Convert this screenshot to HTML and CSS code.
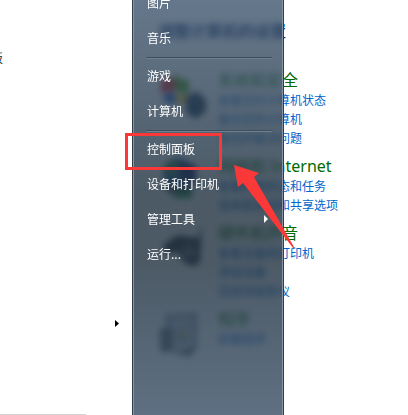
FILE: index.html
```
<!DOCTYPE html>
<html lang="zh-CN">
<head>
<meta charset="utf-8">
<title>控制面板</title>
<link rel="stylesheet" href="styles.css">
</head>
<body>
<div class="desktop">
  <aside class="programs">
    <a class="program" href="#">控制面板</a>
    <svg class="more" width="4" height="7" viewBox="0 0 4 7" aria-hidden="true"><path d="M0 0L4 3.5L0 7Z" fill="#000"/></svg>
    <hr class="search-edge">
  </aside>

  <main class="panel">
    <h1 class="panel-title">调整计算机的设置</h1>
    <section class="category">
      <svg class="icon" width="48" height="50" viewBox="0 0 48 50" aria-hidden="true">
        <path d="M3 10Q12 4 17 8V22Q10 18 3 23Z" fill="#e01010"/><path d="M17 2Q26 12 31 8V21Q24 24 17 18Z" fill="#409800"/><path d="M6 24Q12 20 17 23V34Q10 30 6 32Z" fill="#1050c0"/><path d="M18 22Q24 25 29 22V30Q23 34 18 32Z" fill="#e8b800"/><path d="M28 26L38 20L48 28V40L38 48L28 42Z" fill="#182c48"/>
      </svg>
      <div class="tasks">
        <h2>系统和安全</h2>
        <a href="#">查看您的计算机状态</a>
        <a href="#">备份您的计算机</a>
        <a href="#">查找并解决问题</a>
      </div>
    </section>
    <section class="category">
      <svg class="icon" width="48" height="50" viewBox="0 0 48 50" aria-hidden="true">
        <circle cx="20" cy="16" r="15" fill="#28649c"/><path d="M4 10Q16 0 22 8L14 20Z" fill="#3c9040"/><path d="M22 4L38 8V26L22 22Z" fill="#182060"/><path d="M6 26L36 28L30 38L10 36Z" fill="#46505c"/><path d="M16 34H34V41H16Z" fill="#209040"/>
      </svg>
      <div class="tasks">
        <h2>网络和 Internet</h2>
        <a href="#">查看网络状态和任务</a>
        <a href="#">选择家庭组和共享选项</a>
      </div>
    </section>
    <section class="category">
      <svg class="icon" width="48" height="50" viewBox="0 0 48 50" aria-hidden="true">
        <path d="M6 20L20 11L40 14L44 0L42 38Q34 46 24 36L20 28L6 30Z" fill="#303438"/><circle cx="31" cy="28" r="7" fill="#686c70"/>
      </svg>
      <div class="tasks">
        <h2>硬件和声音</h2>
        <a href="#">查看设备和打印机</a>
        <a href="#">添加设备</a>
        <a href="#">连接到投影仪</a>
      </div>
    </section>
    <section class="category">
      <svg class="icon" width="48" height="50" viewBox="0 0 48 50" aria-hidden="true">
        <path d="M8 6L38 4V38H14Z" fill="#c0c4d8" stroke="#606478" stroke-width="2"/><path d="M2 18H14V42H2Z" fill="#60686c"/><path d="M16 20L34 16V44H16Z" fill="#c8ccd0" stroke="#80848c"/><circle cx="24" cy="28" r="7" fill="#a0a8b0"/><circle cx="24" cy="24" r="3" fill="#c0a040"/><path d="M16 42L40 36L32 47Z" fill="#64686c"/>
      </svg>
      <div class="tasks">
        <h2>程序</h2>
        <a href="#">卸载程序</a>
      </div>
    </section>
  </main>

  <nav class="menu" aria-label="开始菜单">
    <a href="#">图片</a>
    <a href="#">音乐</a>
    <hr>
    <a href="#">游戏</a>
    <a href="#">计算机</a>
    <hr>
    <a href="#">控制面板</a>
    <a href="#">设备和打印机</a>
    <a href="#">管理工具<svg width="4" height="8" viewBox="0 0 4 8" aria-hidden="true"><path d="M0 0L4 4L0 8Z" fill="#fff"/></svg></a>
    <a href="#">运行...</a>
  </nav>

  <svg class="callout" width="176" height="122" viewBox="0 0 176 122" aria-hidden="true">
    <rect x="1.5" y="2.5" width="94" height="34" fill="none" stroke="#fb3838" stroke-width="3"/>
    <path d="M109 33L134 41L129 45L169 115Q169 117 168 116L118 51L113 55Z" fill="#fb3838"/>
  </svg>
</div>
</body>
</html>
```
FILE: styles.css
```
* {
  box-sizing: border-box;
}

body {
  margin: 0;
  background: #fff;
  font: 12px/19px "Noto Sans CJK SC", sans-serif;
}

a {
  text-decoration: none;
}

.desktop {
  position: relative;
  display: grid;
  grid-template-columns: 132px 1fr;
  height: 100vh;
  overflow: hidden;
}

.programs {
  display: flex;
  flex-direction: column;
  padding-top: 48px;
}

.program {
  margin-left: -45px;
  color: #1a2a40;
}

.more {
  margin: auto 13px 87px auto;
}

.search-edge {
  width: 86px;
  margin: 0;
  border: 0;
  border-top: 1px solid #d4d4d4;
}

.panel {
  padding: 20px 0 0 26px;
  white-space: nowrap;
}

.panel-title {
  margin: 0 0 31px;
  color: #002060;
  font-size: 16px;
  line-height: 20px;
}

.category {
  display: flex;
  gap: 12px;
  margin-bottom: 10px;
}

.icon {
  flex: none;
}

.tasks {
  display: flex;
  flex-direction: column;
}

.tasks h2 {
  margin: 0;
  color: #006a00;
  font-family: "Noto Sans", "Noto Sans CJK SC", sans-serif;
  font-size: 16px;
  font-weight: 400;
  line-height: 19px;
}

.tasks a {
  color: #0066cc;
}

.menu {
  position: absolute;
  top: -15px;
  bottom: 0;
  left: 132px;
  width: 152px;
  padding: 0 11px 0 13px;
  border: solid #303e4c;
  border-width: 0 1px;
  background: linear-gradient(rgb(65 89 114 / 80%), rgb(32 49 64 / 80%) 48%, rgb(32 49 64 / 80%) 65%, rgb(54 76 99 / 80%));
  box-shadow: inset 1px 0 #8494a4, inset -1px 0 #8494a4;
  backdrop-filter: blur(3px);
}

.menu a {
  display: flex;
  align-items: center;
  justify-content: space-between;
  height: 35px;
  padding: 0 4px 0 1px;
  color: #fff;
}

.menu hr {
  height: 2px;
  margin: 2px 0 -1px;
  border: 0;
  border-top: 1px solid #3f4e5c;
  border-bottom: 1px solid #708090;
}

.callout {
  position: absolute;
  top: 132px;
  left: 125px;
}
```
